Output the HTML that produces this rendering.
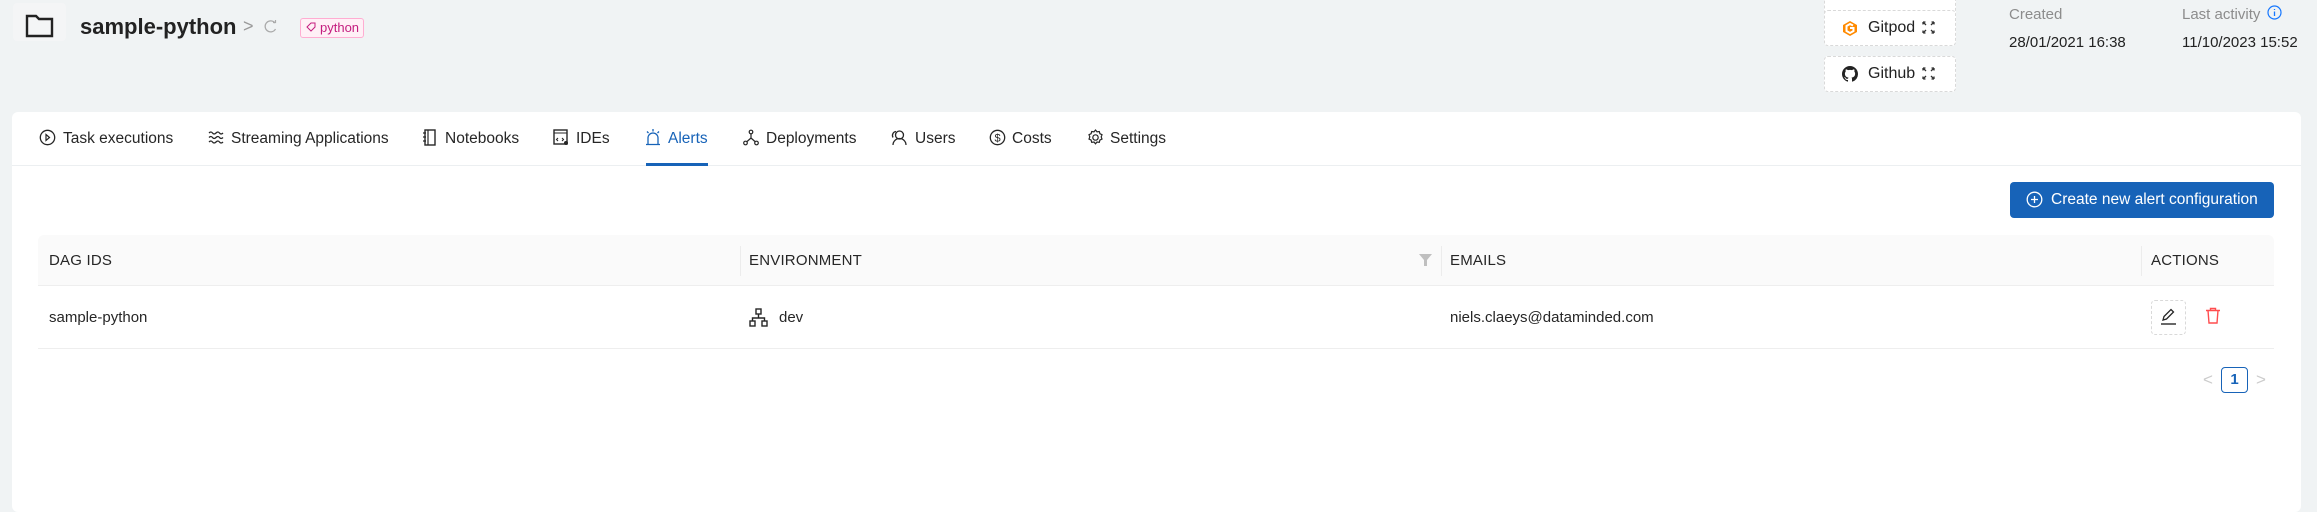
<!DOCTYPE html>
<html><head><meta charset="utf-8">
<style>
*{margin:0;padding:0;box-sizing:border-box}
body{width:2317px;height:505px;background:#f0f3f4;font-family:"Liberation Sans",sans-serif;color:#222;position:relative;overflow:hidden}
.a{position:absolute}
.card{left:12px;top:112px;width:2289px;height:400px;background:#fff;border-radius:6px}
.tab{position:absolute;top:129px;font-size:15.5px;color:#262626;line-height:20px;white-space:nowrap}
.ic{position:absolute;top:129px}
.btn{position:absolute;left:1824px;width:132px;height:36px;background:#fff;border:1px dashed #d9d9d9;border-radius:4px;font-size:16px;color:#222}
.hdr{position:absolute;top:252px;font-size:15px;color:#262626;letter-spacing:.2px}
.sep{position:absolute;top:246px;width:1px;height:30px;background:#ececec}
.cell{position:absolute;top:309px;font-size:15px;color:#262626}
</style></head><body>
<div class="a" style="left:13px;top:3px;width:53px;height:38px;background:#f4f5f6;border-radius:4px"></div>
<svg class="a" style="left:25px;top:14px" width="29" height="24" viewBox="0 0 29 24"><path d="M2 2h9l3 3h13v17H2z" fill="none" stroke="#222" stroke-width="2.4" stroke-linejoin="miter"/></svg>
<div class="a" style="left:80px;top:14px;font-size:22px;font-weight:bold;color:#222">sample-python</div>
<div class="a" style="left:243px;top:16px;font-size:18px;color:#999">&gt;</div>
<svg class="a" style="left:264px;top:19px" width="13" height="15" viewBox="0 0 13 15"><path d="M11 4A5.5 5.5 0 1 0 11.5 10" fill="none" stroke="#aaa" stroke-width="1.3"/><path d="M9 3.5h2.5V1" fill="none" stroke="#aaa" stroke-width="1.2"/></svg>
<div class="a" style="left:300px;top:18px;width:64px;height:20px;border:1px solid #ffadd2;background:#fff0f6;border-radius:3px;color:#c41d7f;font-size:13px;line-height:18px;padding-left:19px">python</div>
<svg class="a" style="left:306px;top:22px" width="10" height="10" viewBox="0 0 10 10"><path d="M1 5L5 1h4v4L5 9z" fill="none" stroke="#c41d7f" stroke-width="1"/></svg>

<div class="btn" style="top:-20px"></div>
<div class="btn" style="top:10px"><svg class="a" style="left:17px;top:9px" width="16" height="17" viewBox="0 0 16 17"><path d="M8 1L15 5v7l-7 4-7-4V5z" fill="#ff8a00"/><path d="M11 5.5L8 4 4.5 6v5L8 13l3.5-2V8H8" fill="none" stroke="#fff" stroke-width="2"/></svg><span class="a" style="left:43px;top:8px">Gitpod</span><svg class="a" style="left:97px;top:10px" width="13" height="13" viewBox="0 0 13 13"><path d="M1 1l3 3M12 1L9 4M1 12l3-3M12 12L9 9M1 1v2.5M1 1h2.5M12 1v2.5M12 1H9.5M1 12V9.5M1 12h2.5M12 12V9.5M12 12H9.5" stroke="#333" stroke-width="1.3" fill="none"/></svg></div>
<div class="btn" style="top:56px"><svg class="a" style="left:17px;top:9px" width="16" height="16" viewBox="0 0 16 16"><path fill="#222" d="M8 0C3.58 0 0 3.58 0 8c0 3.54 2.290 6.53 5.47 7.59.4.07.55-.17.55-.38v-1.33c-2.23.49-2.7-1.070-2.7-1.070-.36-.92-.89-1.17-.89-1.17-.73-.5.06-.49.06-.49.8.06 1.23.83 1.23.83.72 1.23 1.88.87 2.34.67.07-.52.28-.87.51-1.07-1.78-.2-3.65-.89-3.65-3.95 0-.87.31-1.59.82-2.15-.08-.2-.36-1.02.08-2.12 0 0 .67-.21 2.2.82.64-.18 1.32-.27 2-.27.68 0 1.36.09 2 .27 1.53-1.04 2.2-.82 2.2-.82.44 1.1.16 1.92.08 2.12.51.56.82 1.27.82 2.15 0 3.07-1.87 3.75-3.65 3.95.29.25.54.73.54 1.48v2.2c0 .21.15.46.55.38A8.01 8.01 0 0016 8c0-4.42-3.58-8-8-8z"/></svg><span class="a" style="left:43px;top:8px">Github</span><svg class="a" style="left:97px;top:10px" width="13" height="13" viewBox="0 0 13 13"><path d="M1 1l3 3M12 1L9 4M1 12l3-3M12 12L9 9M1 1v2.5M1 1h2.5M12 1v2.5M12 1H9.5M1 12V9.5M1 12h2.5M12 12V9.5M12 12H9.5" stroke="#333" stroke-width="1.3" fill="none"/></svg></div>

<div class="a" style="left:2009px;top:6px;font-size:15px;color:#8c8c8c">Created</div>
<div class="a" style="left:2009px;top:34px;font-size:15px;color:#222">28/01/2021 16:38</div>
<div class="a" style="left:2182px;top:6px;font-size:15px;color:#8c8c8c">Last activity</div>
<svg class="a" style="left:2267px;top:5px" width="15" height="15" viewBox="0 0 15 15"><circle cx="7.5" cy="7.5" r="6.5" fill="none" stroke="#1677ff" stroke-width="1.2"/><path d="M7.5 6.5v4.5M7.5 4v1" stroke="#1677ff" stroke-width="1.3"/></svg>
<div class="a" style="left:2182px;top:34px;font-size:15px;color:#222">11/10/2023 15:52</div>

<div class="a card"></div>
<div class="a" style="left:12px;top:165px;width:2289px;height:1px;background:#eceff1"></div>
<div class="a" style="left:646px;top:163px;width:62px;height:3px;background:#1763b8"></div>

<svg class="ic" style="left:39px" width="17" height="17" viewBox="0 0 17 17"><circle cx="8.5" cy="8.5" r="7.2" fill="none" stroke="#262626" stroke-width="1.3"/><path d="M7 5.5l3.5 3-3.5 3z" fill="none" stroke="#262626" stroke-width="1.2"/></svg>
<div class="tab" style="left:63px">Task executions</div>
<svg class="ic" style="left:208px" width="16" height="17" viewBox="0 0 16 17"><path d="M1 4q2-2 3.5 0t3.5 0 3.5 0 3.5 0M1 8.5q2-2 3.5 0t3.5 0 3.5 0 3.5 0M1 13q2-2 3.5 0t3.5 0 3.5 0 3.5 0" fill="none" stroke="#262626" stroke-width="1.3"/></svg>
<div class="tab" style="left:231px">Streaming Applications</div>
<svg class="ic" style="left:423px" width="13" height="17" viewBox="0 0 13 17"><rect x="2" y="1" width="10" height="15" fill="none" stroke="#262626" stroke-width="1.4"/><path d="M5 1v15M0 4h3M0 8h3M0 12h3" stroke="#262626" stroke-width="1.2"/></svg>
<div class="tab" style="left:445px">Notebooks</div>
<svg class="ic" style="left:553px" width="16" height="17" viewBox="0 0 16 17"><rect x="1" y="1" width="13" height="14" fill="none" stroke="#262626" stroke-width="1.4"/><path d="M1 4h13M5 9l-1.5 1.5L5 12M9 9l1.5 1.5L9 12" fill="none" stroke="#262626" stroke-width="1.1"/><circle cx="13" cy="14" r="2" fill="#262626"/></svg>
<div class="tab" style="left:576px">IDEs</div>
<svg class="ic" style="left:645px" width="16" height="17" viewBox="0 0 16 17"><path d="M3 15V9a5 5 0 0 1 10 0v6M1 15.5h14M8 0v2.5M2 2.5l1.5 1.5M14 2.5l-1.5 1.5" fill="none" stroke="#1763b8" stroke-width="1.3"/></svg>
<div class="tab" style="left:668px;color:#1763b8">Alerts</div>
<svg class="ic" style="left:743px" width="16" height="17" viewBox="0 0 16 17"><circle cx="8" cy="3" r="1.8" fill="none" stroke="#262626" stroke-width="1.2"/><circle cx="2.5" cy="14" r="1.8" fill="none" stroke="#262626" stroke-width="1.2"/><circle cx="13.5" cy="14" r="1.8" fill="none" stroke="#262626" stroke-width="1.2"/><path d="M8 5v4M8 9l-4.5 4M8 9l4.5 4" stroke="#262626" stroke-width="1.2"/></svg>
<div class="tab" style="left:766px">Deployments</div>
<svg class="ic" style="left:890px" width="17" height="17" viewBox="0 0 17 17"><circle cx="9.5" cy="6" r="4" fill="none" stroke="#262626" stroke-width="1.3"/><path d="M3 16a6.5 6.5 0 0 1 13 0M6 2.5a4 4 0 0 0-3 6" fill="none" stroke="#262626" stroke-width="1.3"/></svg>
<div class="tab" style="left:915px">Users</div>
<svg class="ic" style="left:989px" width="17" height="17" viewBox="0 0 17 17"><circle cx="8.5" cy="8.5" r="7.2" fill="none" stroke="#262626" stroke-width="1.3"/><text x="8.5" y="12.5" font-size="11" text-anchor="middle" font-family="Liberation Sans" fill="#262626">$</text></svg>
<div class="tab" style="left:1012px">Costs</div>
<svg class="ic" style="left:1087px" width="17" height="17" viewBox="0 0 17 17"><path d="M8.5 1l1.5 1.8 2.3-.3.6 2.2 2.1 1-.8 2.2.8 2.2-2.1 1-.6 2.2-2.3-.3-1.5 1.8-1.5-1.8-2.3.3-.6-2.2-2.1-1 .8-2.2-.8-2.2 2.1-1 .6-2.2 2.3.3z" fill="none" stroke="#262626" stroke-width="1.2"/><circle cx="8.5" cy="8.5" r="2.7" fill="none" stroke="#262626" stroke-width="1.2"/></svg>
<div class="tab" style="left:1110px">Settings</div>

<div class="a" style="left:2010px;top:182px;width:264px;height:36px;background:#1763b8;border-radius:4px;color:#fff;font-size:15.5px;line-height:36px;padding-left:41px;white-space:nowrap">Create new alert configuration</div>
<svg class="a" style="left:2026px;top:191px" width="17" height="17" viewBox="0 0 17 17"><circle cx="8.5" cy="8.5" r="7.3" fill="none" stroke="#fff" stroke-width="1.3"/><path d="M8.5 5v7M5 8.5h7" stroke="#fff" stroke-width="1.3"/></svg>

<div class="a" style="left:38px;top:235px;width:2236px;height:51px;background:#fafafa;border-bottom:1px solid #eee;border-radius:6px 6px 0 0"></div>
<div class="hdr" style="left:49px">DAG IDS</div>
<div class="sep" style="left:740px"></div>
<div class="hdr" style="left:749px">ENVIRONMENT</div>
<svg class="a" style="left:1419px;top:254px" width="13" height="12" viewBox="0 0 13 12"><path d="M0 0h13L8 6v6H5V6z" fill="#bfbfbf"/></svg>
<div class="sep" style="left:1441px"></div>
<div class="hdr" style="left:1450px">EMAILS</div>
<div class="sep" style="left:2141px"></div>
<div class="hdr" style="left:2151px">ACTIONS</div>

<div class="a" style="left:38px;top:348px;width:2236px;height:1px;background:#eee"></div>
<div class="cell" style="left:49px">sample-python</div>
<svg class="a" style="left:749px;top:308px" width="19" height="19" viewBox="0 0 19 19"><rect x="7" y="1" width="5" height="5" fill="none" stroke="#262626" stroke-width="1.4"/><rect x="1" y="13" width="5" height="5" fill="none" stroke="#262626" stroke-width="1.4"/><rect x="13" y="13" width="5" height="5" fill="none" stroke="#262626" stroke-width="1.4"/><path d="M9.5 6v4M3.5 13v-3h12v3" fill="none" stroke="#262626" stroke-width="1.4"/></svg>
<div class="cell" style="left:779px">dev</div>
<div class="cell" style="left:1450px">niels.claeys@dataminded.com</div>
<div class="a" style="left:2151px;top:300px;width:35px;height:35px;border:1px dashed #d9d9d9;border-radius:4px;background:#fff"></div>
<svg class="a" style="left:2160px;top:308px" width="17" height="17" viewBox="0 0 17 17"><path d="M3 12l1-3.5L11 1.5l2.5 2.5-7 7z" fill="none" stroke="#262626" stroke-width="1.3"/><path d="M1 16h15" stroke="#262626" stroke-width="1.4"/></svg>
<svg class="a" style="left:2205px;top:307px" width="16" height="17" viewBox="0 0 16 17"><path d="M1 3.5h14M5.5 3.5V1.5h5v2M3 3.5l1 12.5h8l1-12.5" fill="none" stroke="#ff4d4f" stroke-width="1.4"/></svg>

<div class="a" style="left:2203px;top:370px;font-size:17px;color:#ccc">&lt;</div>
<div class="a" style="left:2221px;top:367px;width:27px;height:26px;border:1px solid #1763b8;border-radius:4px;color:#1763b8;font-weight:bold;font-size:15px;text-align:center;line-height:24px">1</div>
<div class="a" style="left:2256px;top:370px;font-size:17px;color:#ccc">&gt;</div>
</body></html>
